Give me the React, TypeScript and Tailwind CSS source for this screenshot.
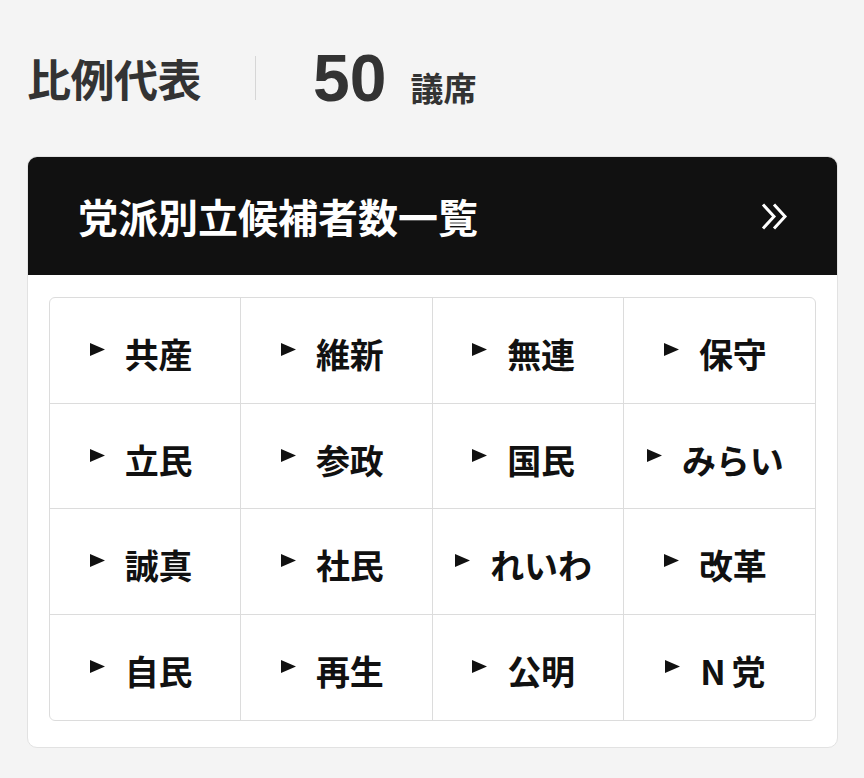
import React from 'react'

const parties = [
  '共産', '維新', '無連', '保守',
  '立民', '参政', '国民', 'みらい',
  '誠真', '社民', 'れいわ', '改革',
  '自民', '再生', '公明', 'N党',
]

function Triangle() {
  return (
    <svg width="15" height="13" viewBox="0 0 15 13" className="shrink-0 mb-[9px]">
      <path d="M0 0 L15 6.5 L0 13 Z" fill="#111" />
    </svg>
  )
}

export default function App() {
  return (
    <div
      className="w-[864px] h-[778px] bg-[#f4f4f4] px-[27px] pt-[50px]"
      style={{ fontFamily: '"Noto Sans CJK JP", "Noto Sans", sans-serif' }}
    >
      {/* Header */}
      <div className="flex items-center h-[56px]">
        <h1 className="text-[44px] font-bold text-[#333] leading-none tracking-[-0.5px]">比例代表</h1>
        <div className="w-px h-[44px] bg-[#d6d6d6] ml-[54px] mr-[57px]" />
        <div className="flex items-baseline text-[#333]">
          <span
            className="text-[66px] font-bold leading-none"
            style={{ fontFamily: '"Liberation Sans", Arial, sans-serif' }}
          >
            50
          </span>
          <span className="text-[33px] font-bold leading-none ml-[24px]">議席</span>
        </div>
      </div>

      {/* Card */}
      <div className="mt-[50px] w-[811px] rounded-[10px] border border-[#e2e2e2] bg-white overflow-hidden">
        <div className="h-[118px] bg-[#111] flex items-center justify-between pl-[50px] pr-[46px]">
          <span className="text-[40px] font-bold text-white leading-none">党派別立候補者数一覧</span>
          <svg width="30" height="27" viewBox="0 0 30 27">
            <path d="M2 1.5 L13 13.5 L2 25.5 M13 1.5 L24 13.5 L13 25.5" fill="none" stroke="#fff" strokeWidth="3" />
          </svg>
        </div>
        <div className="px-[21px] pt-[22px] pb-[26px]">
          <div className="grid grid-cols-4 rounded-[6px] border border-[#dcdcdc] overflow-hidden">
            {parties.map((p, i) => (
              <div
                key={p}
                className={`h-[105.5px] flex items-center justify-center gap-[20px] pr-[8px] pt-[8px] ${
                  i % 4 !== 3 ? 'border-r border-[#dcdcdc]' : ''
                } ${i < 12 ? 'border-b border-[#dcdcdc]' : ''}`}
              >
                <Triangle />
                {p === 'N党' ? (
                  <span className="text-[34px] font-bold text-[#111] leading-none">
                    N<span className="ml-[6px]">党</span>
                  </span>
                ) : (
                  <span className="text-[34px] font-bold text-[#111] leading-none">{p}</span>
                )}
              </div>
            ))}
          </div>
        </div>
      </div>
    </div>
  )
}
